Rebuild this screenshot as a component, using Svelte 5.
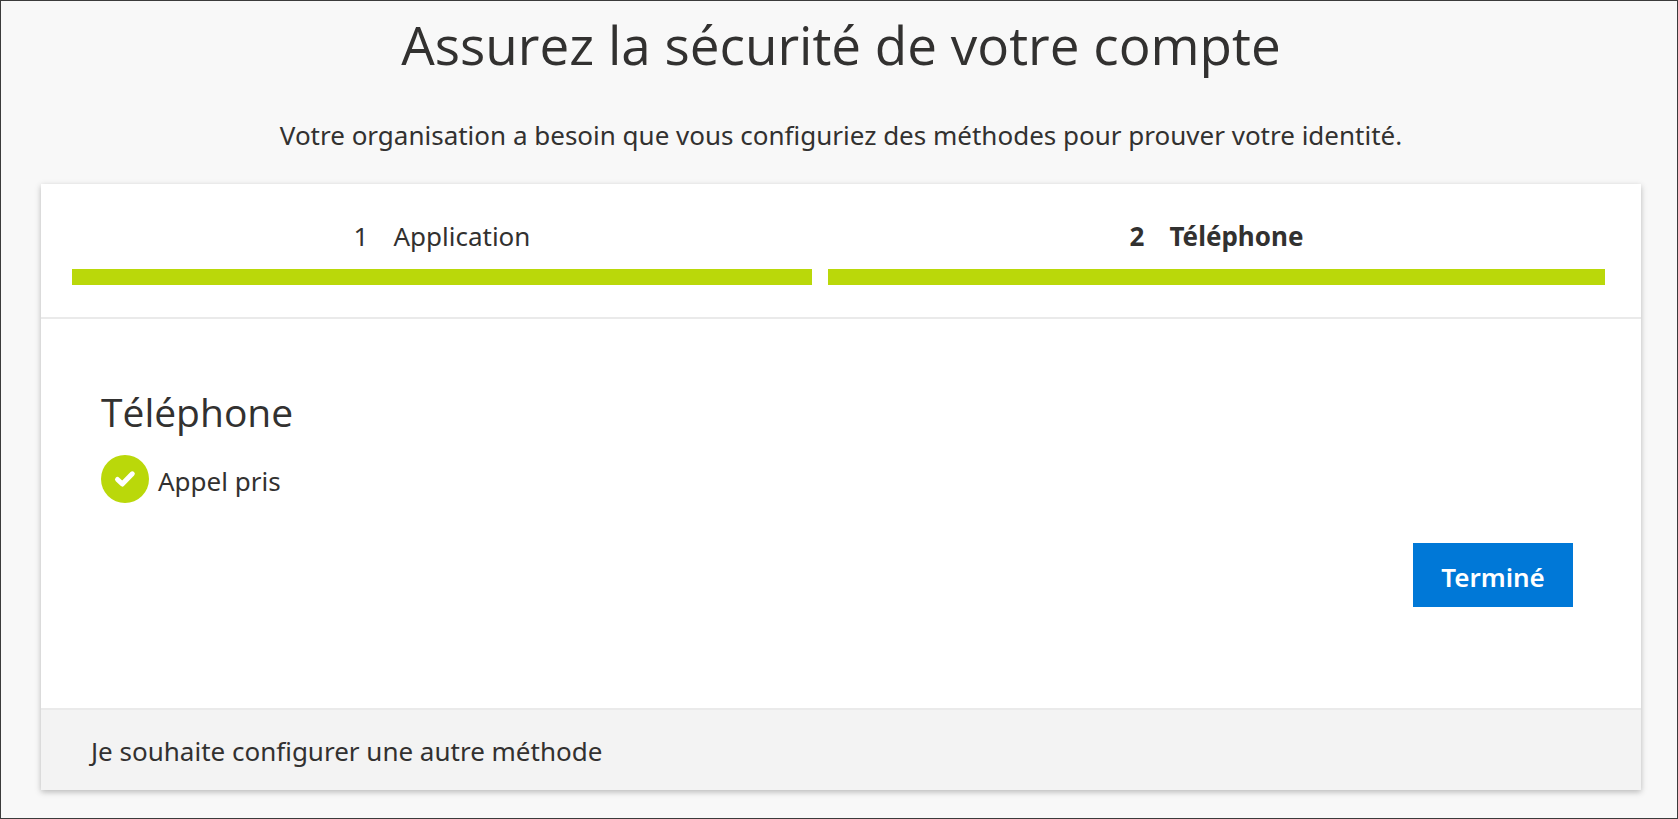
<script>
  const steps = [
    { number: 1, name: 'Application', current: false },
    { number: 2, name: 'Téléphone', current: true }
  ];
</script>

<main class="page">
  <header class="intro">
    <h1>Assurez la sécurité de votre compte</h1>
    <p>Votre organisation a besoin que vous configuriez des méthodes pour prouver votre identité.</p>
  </header>

  <section class="card">
    <ol class="steps">
      {#each steps as step}
        <li class:current={step.current} aria-current={step.current ? 'step' : undefined}>
          <div class="label"><span>{step.number}</span><span>{step.name}</span></div>
          <div class="bar"></div>
        </li>
      {/each}
    </ol>

    <div class="content">
      <h2>Téléphone</h2>
      <div class="status">
        <svg viewBox="0 0 48 48" width="48" height="48" aria-hidden="true">
          <circle cx="24" cy="24" r="24" fill="#bad80a" />
          <path d="M16.5 24.5 L21.3 29 L31.3 18.8" fill="none" stroke="#fff" stroke-width="5" stroke-linecap="round" stroke-linejoin="round" />
        </svg>
        <span>Appel pris</span>
      </div>
      <div class="actions"><button type="button">Terminé</button></div>
    </div>

    <footer><a href="#methode">Je souhaite configurer une autre méthode</a></footer>
  </section>
</main>

<style>
  :global(body) {
    margin: 0;
  }

  .page {
    box-sizing: border-box;
    min-height: 100vh;
    padding: 0 36px 28px 40px;
    border: 1px solid #3b3b3b;
    background: #f8f8f8;
    color: #323130;
    font-family: "Noto Sans", "Open Sans", sans-serif;
    font-size: 26px;
    line-height: 36px;
  }

  .intro {
    padding: 8px 0 31px;
    text-align: center;
  }

  h1,
  h2 {
    font-family: "Open Sans", "Noto Sans", sans-serif;
    font-weight: 400;
  }

  h1 {
    margin: 0 0 36px;
    font-size: 53px;
    line-height: 72px;
  }

  p {
    margin: 0;
  }

  .card {
    background: #fff;
    box-shadow: 0 2px 6px rgba(0, 0, 0, 0.26);
  }

  .steps {
    display: grid;
    grid-template-columns: 740fr 777fr;
    gap: 16px;
    margin: 0;
    padding: 34px 36px 32px 31px;
    border-bottom: 2px solid #eaeaea;
    list-style: none;
  }

  .label {
    display: flex;
    justify-content: center;
    gap: 25px;
    margin-bottom: 15px;
  }

  .current .label {
    font-weight: 700;
  }

  .bar {
    height: 16px;
    background: #bad80a;
  }

  .content {
    padding: 65px 68px 101px 60px;
  }

  h2 {
    margin: 0 0 15px;
    font-size: 39px;
    line-height: 56px;
  }

  .status {
    display: flex;
    align-items: center;
    gap: 9px;
  }

  .status span {
    padding-top: 4px;
  }

  .actions {
    display: flex;
    justify-content: flex-end;
    margin-top: 40px;
  }

  button {
    min-width: 160px;
    height: 64px;
    padding: 3px 24px 0;
    border: 0;
    background: #0078d7;
    color: #fff;
    font: inherit;
    font-weight: 600;
  }

  footer {
    padding: 23px 50px 21px;
    border-top: 2px solid #eaeaea;
    background: #f3f3f3;
  }

  a {
    color: inherit;
    text-decoration: none;
  }
</style>
